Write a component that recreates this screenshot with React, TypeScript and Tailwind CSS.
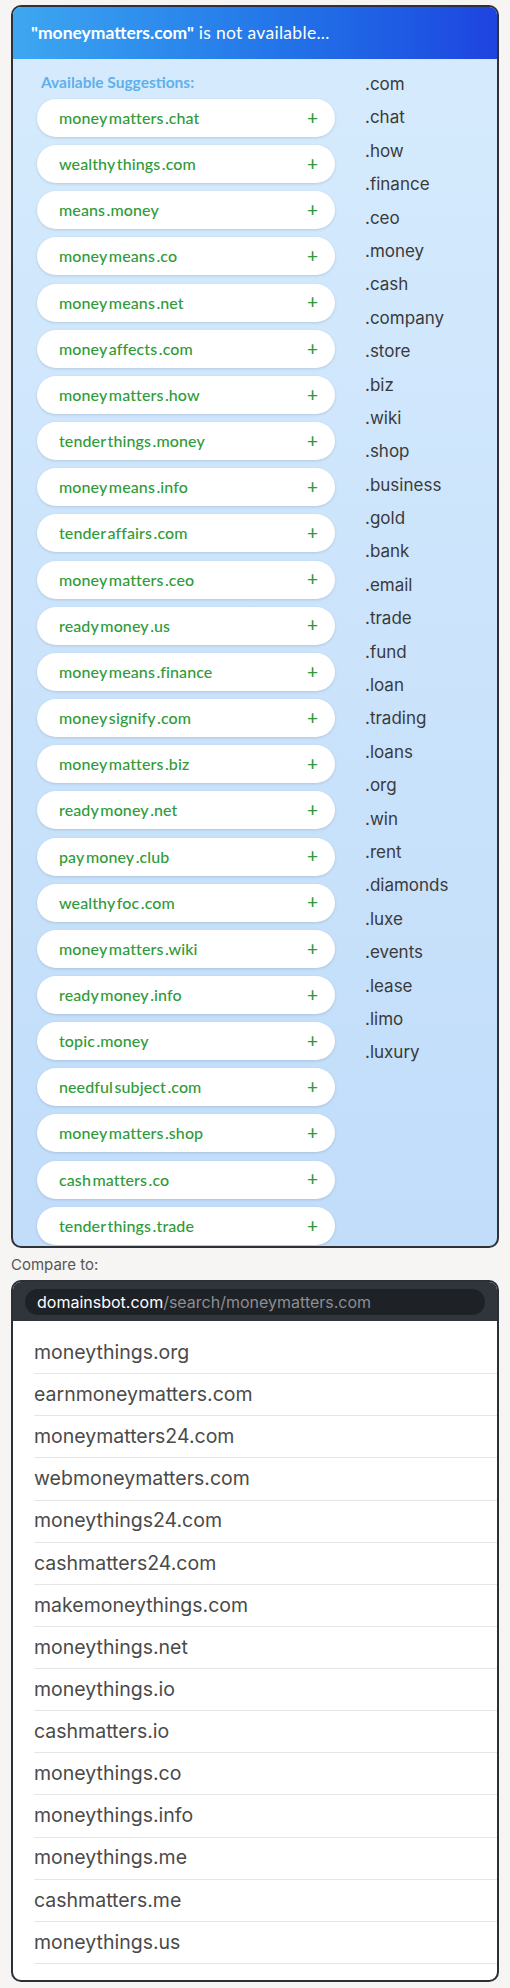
// Domain suggestions panel + comparison list

const suggestions = [
  "money|matters|.chat",
  "wealthy|things|.com",
  "means|.money",
  "money|means|.co",
  "money|means|.net",
  "money|affects|.com",
  "money|matters|.how",
  "tender|things|.money",
  "money|means|.info",
  "tender|affairs|.com",
  "money|matters|.ceo",
  "ready|money|.us",
  "money|means|.finance",
  "money|signify|.com",
  "money|matters|.biz",
  "ready|money|.net",
  "pay|money|.club",
  "wealthy|foc|.com",
  "money|matters|.wiki",
  "ready|money|.info",
  "topic|.money",
  "needful|subject|.com",
  "money|matters|.shop",
  "cash|matters|.co",
  "tender|things|.trade",
];

const tlds = [
  ".com", ".chat", ".how", ".finance", ".ceo", ".money", ".cash", ".company",
  ".store", ".biz", ".wiki", ".shop", ".business", ".gold", ".bank", ".email",
  ".trade", ".fund", ".loan", ".trading", ".loans", ".org", ".win", ".rent",
  ".diamonds", ".luxe", ".events", ".lease", ".limo", ".luxury",
];

const compare = [
  "moneythings.org",
  "earnmoneymatters.com",
  "moneymatters24.com",
  "webmoneymatters.com",
  "moneythings24.com",
  "cashmatters24.com",
  "makemoneythings.com",
  "moneythings.net",
  "moneythings.io",
  "cashmatters.io",
  "moneythings.co",
  "moneythings.info",
  "moneythings.me",
  "cashmatters.me",
  "moneythings.us",
];

function SuggestionPill({ name }: { name: string }) {
  return (
    <div className="flex h-[38px] items-center justify-between rounded-full bg-white pl-[22px] pr-[17px] shadow-[0_1px_3px_rgba(0,0,0,0.13)]">
      <span className="flex gap-[1.5px] text-[16px] font-medium tracking-[0.1px] text-[#2f9b39]">
        {name.split("|").map((part) => (
          <span key={part}>{part}</span>
        ))}
      </span>
      <span className="text-[19px] font-medium text-[#2f9b39]">+</span>
    </div>
  );
}

export default function App() {
  return (
    <div className="min-h-[1988px] bg-[#f6f5f3] px-[11px] pt-[5px]" style={{ fontFamily: "Inter, 'Liberation Sans', sans-serif" }}>
      {/* Suggestions card */}
      <div className="h-[1243px] overflow-hidden rounded-[10px] border-2 border-[#2e3238] bg-gradient-to-b from-[#d6ebfd] to-[#c1ddfa]">
        <div
          className="flex h-[52px] items-center bg-gradient-to-r from-[#3ea7f1] to-[#1f43df] pl-[18px] text-[17.5px] text-white"
          style={{ fontFamily: "Lato, 'Noto Sans', sans-serif" }}
        >
          <span className="font-bold">"moneymatters.com"</span>
          <span className="ml-[5px] font-normal tracking-[0.3px]">is not available...</span>
        </div>

        <div className="flex pl-[24px]">
          <div className="w-[298px] pt-[14px]" style={{ fontFamily: "Lato, 'Noto Sans', sans-serif" }}>
            <div className="mb-[8px] h-[18px] pl-[4px] text-[15.5px] font-bold leading-[18px] text-[#5fb0ec]">Available Suggestions:</div>
            <div className="flex flex-col gap-[8.17px]">
              {suggestions.map((s) => (
                <SuggestionPill key={s} name={s} />
              ))}
            </div>
          </div>

          <div className="ml-[30px] pt-[9px]">
            {tlds.map((t) => (
              <div key={t} className="h-[33.4px] text-[17px] leading-[33.4px] text-[#3a3a3a]">
                {t}
              </div>
            ))}
          </div>
        </div>
      </div>

      {/* Compare section */}
      <div className="flex h-[32px] items-center pt-[2px] text-[15px] text-[#555]">Compare to:</div>

      <div className="h-[702px] overflow-hidden rounded-[10px] border-2 border-[#2b2f36] bg-white">
        <div className="flex h-[39px] items-center bg-[#30353c] px-[12px]">
          <div className="flex h-[26px] w-full items-center rounded-full bg-[#1e2126] pl-[12px] text-[16px]">
            <span className="text-white">domainsbot.com</span>
            <span className="text-[#8b8e92]">/search/moneymatters.com</span>
          </div>
        </div>
        <div className="pl-[21px] pt-[11px]">
          {compare.map((c) => (
            <div key={c} className="flex h-[42.14px] items-center border-b border-[#e6e6e6] text-[19.5px] text-[#4a4a4a]">
              {c}
            </div>
          ))}
        </div>
      </div>
    </div>
  );
}
